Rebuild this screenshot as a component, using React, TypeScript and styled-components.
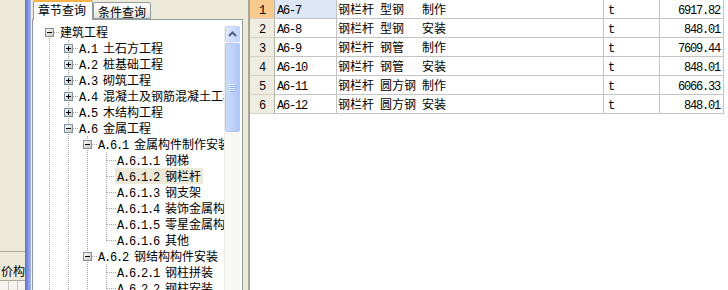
import React from 'react';
import styled, { createGlobalStyle } from 'styled-components';

const GlobalStyle = createGlobalStyle`
  html, body {
    margin: 0;
    padding: 0;
    background: #ffffff;
  }
  body {
    font-family: "Noto Sans CJK SC", "DejaVu Sans", sans-serif;
    font-size: 12px;
  }
`;

const Screen = styled.div`
  display: flex;
  width: 728px;
  height: 290px;
  overflow: hidden;
  background: #ffffff;
`;

const SideStrip = styled.div`
  display: flex;
  flex-direction: column;
  justify-content: flex-end;
  width: 25px;
  flex: none;
  background: #ece9d8;
`;

const SideTab = styled.div`
  height: 30px;
  border-top: 1px solid #aca899;
  border-bottom: 1px solid #aca899;
  box-sizing: border-box;
  padding: 12px 0 0 1px;
  line-height: 14px;
  white-space: nowrap;
  overflow: hidden;
  color: #000;
`;

const SideFoot = styled.div`
  display: flex;
  height: 9px;
  background: #f4f3ee;
`;

const SideFootCell = styled.div`
  width: 8px;
  border-right: 1px solid #c9c7ba;
`;

const BlueBar = styled.div`
  width: 6px;
  flex: none;
  background: linear-gradient(to right, #5d70c9, #8092e2 50%, #a4b3f1);
  border-right: 1px solid #f2f4fd;
`;

const NavPanel = styled.div`
  display: flex;
  flex-direction: column;
  width: 216px;
  flex: none;
  background: #ece9d8;
`;

const TabStrip = styled.div`
  display: flex;
  align-items: flex-end;
  height: 19px;
  padding-left: 1px;
  position: relative;
  z-index: 1;
`;

const Tab = styled.div<{ $active?: boolean }>`
  box-sizing: border-box;
  height: ${(p) => (p.$active ? '20px' : '17px')};
  margin-bottom: ${(p) => (p.$active ? '-1px' : '0')};
  width: ${(p) => (p.$active ? '60px' : '58px')};
  padding: ${(p) => (p.$active ? '0 0 0 4px' : '1px 0 0 4px')};
  line-height: 15px;
  border: 1px solid #919b9c;
  border-bottom: ${(p) => (p.$active ? 'none' : '1px solid #919b9c')};
  border-top: ${(p) => (p.$active ? '2px solid #f8b344' : '1px solid #919b9c')};
  border-radius: 2px 2px 0 0;
  background: ${(p) =>
    p.$active ? '#fcfcfe' : 'linear-gradient(#ffffff, #f3f3ef 60%, #e4e3dc)'};
  color: #000;
  white-space: nowrap;
`;

const TabPage = styled.div`
  flex: 1;
  display: flex;
  margin-right: 5px;
  padding: 4px 2px 0 1px;
  border: 1px solid #919b9c;
  border-bottom: none;
  background: #ffffff;
  min-height: 0;
`;

const Tree = styled.div`
  flex: 1;
  min-width: 0;
  overflow: hidden;
  padding-left: 6px;
`;

const TreeRow = styled.div`
  display: flex;
  align-items: center;
  height: 16px;
  white-space: nowrap;
`;

const Label = styled.span<{ $selected?: boolean }>`
  margin-left: -1px;
  padding: 0 2px;
  height: 16px;
  line-height: 16px;
  background: ${(p) => (p.$selected ? '#ece9d8' : 'transparent')};
  color: #000;
`;

// half-width latin, 6px per character like the bitmap font in the original
const Code = styled.span`
  font-family: "Liberation Mono", "DejaVu Sans Mono", monospace;
  font-size: 12px;
  letter-spacing: -1.2px;
`;

const Scrollbar = styled.div`
  display: flex;
  flex-direction: column;
  width: 16px;
  flex: none;
  margin-top: 2px;
  background: #f7f7f3;
  border-left: 1px solid #eeede5;
  box-sizing: border-box;
`;

const ScrollButton = styled.div`
  display: flex;
  align-items: center;
  justify-content: center;
  height: 16px;
  box-sizing: border-box;
  border: 1px solid #c3d3fd;
  border-radius: 2px;
  background: linear-gradient(to right, #dce7fe, #c4d5fc);
`;

const Thumb = styled.div`
  display: flex;
  align-items: center;
  justify-content: center;
  height: 89px;
  margin-top: 1px;
  box-sizing: border-box;
  border: 1px solid #b4c8f6;
  border-radius: 2px;
  background: linear-gradient(to right, #cad9fd, #bdd0fb 60%, #b0c5f7);
`;

const Splitter = styled.div`
  width: 1px;
  flex: none;
  background: #aca899;
`;

const GridPanel = styled.div`
  flex: 1;
  border-left: 1px solid #8fa3c0;
  background: #ffffff;
`;

const GridRow = styled.div`
  display: grid;
  grid-template-columns: 25px 62px 267px 56px 64px;
  height: 19px;
`;

const Cell = styled.div<{ $align?: 'left' | 'right' | 'center'; $pad?: number; $bg?: string }>`
  box-sizing: border-box;
  height: 19px;
  line-height: 18px;
  border-right: 1px solid #c4c4c4;
  border-bottom: 1px solid #c4c4c4;
  text-align: ${(p) => p.$align || 'left'};
  padding: ${(p) => (p.$align === 'right' ? `0 ${p.$pad ?? 3}px 0 0` : `0 0 0 ${p.$pad ?? 2}px`)};
  background: ${(p) => p.$bg || '#ffffff'};
  white-space: nowrap;
  overflow: hidden;
  color: #000;
`;

const HeaderCell = styled(Cell)<{ $current?: boolean }>`
  background: ${(p) => (p.$current ? '#f9c98e' : '#efede2')};
  border-right-color: #b5b3a6;
  border-bottom-color: #d4d2c6;
  text-align: center;
  padding: 0;
`;

const Word = styled.span<{ $w?: number }>`
  display: inline-block;
  width: ${(p) => (p.$w ? `${p.$w}px` : 'auto')};
`;

type Guide = 'none' | 'line' | 'tee' | 'end' | 'first';

interface Node {
  guides: Guide[];
  toggle?: 'plus' | 'minus';
  code?: string;
  text: string;
  selected?: boolean;
}

const nodes: Node[] = [
  { guides: ['first'], toggle: 'minus', text: '建筑工程' },
  { guides: ['line', 'tee'], toggle: 'plus', code: 'A.1 ', text: '土石方工程' },
  { guides: ['line', 'tee'], toggle: 'plus', code: 'A.2 ', text: '桩基础工程' },
  { guides: ['line', 'tee'], toggle: 'plus', code: 'A.3 ', text: '砌筑工程' },
  { guides: ['line', 'tee'], toggle: 'plus', code: 'A.4 ', text: '混凝土及钢筋混凝土工程' },
  { guides: ['line', 'tee'], toggle: 'plus', code: 'A.5 ', text: '木结构工程' },
  { guides: ['line', 'tee'], toggle: 'minus', code: 'A.6 ', text: '金属工程' },
  { guides: ['line', 'line', 'tee'], toggle: 'minus', code: 'A.6.1 ', text: '金属构件制作安装' },
  { guides: ['line', 'line', 'line', 'tee'], code: 'A.6.1.1 ', text: '钢梯' },
  { guides: ['line', 'line', 'line', 'tee'], code: 'A.6.1.2 ', text: '钢栏杆', selected: true },
  { guides: ['line', 'line', 'line', 'tee'], code: 'A.6.1.3 ', text: '钢支架' },
  { guides: ['line', 'line', 'line', 'tee'], code: 'A.6.1.4 ', text: '装饰金属构件' },
  { guides: ['line', 'line', 'line', 'tee'], code: 'A.6.1.5 ', text: '零星金属构件' },
  { guides: ['line', 'line', 'line', 'end'], code: 'A.6.1.6 ', text: '其他' },
  { guides: ['line', 'line', 'tee'], toggle: 'minus', code: 'A.6.2 ', text: '钢结构构件安装' },
  { guides: ['line', 'line', 'line', 'tee'], code: 'A.6.2.1 ', text: '钢柱拼装' },
  { guides: ['line', 'line', 'line', 'tee'], code: 'A.6.2.2 ', text: '钢柱安装' },
];

const rows = [
  { code: 'A6-7', words: ['钢栏杆', '型钢', '制作'], unit: 't', qty: '6917.82' },
  { code: 'A6-8', words: ['钢栏杆', '型钢', '安装'], unit: 't', qty: '848.01' },
  { code: 'A6-9', words: ['钢栏杆', '钢管', '制作'], unit: 't', qty: '7609.44' },
  { code: 'A6-10', words: ['钢栏杆', '钢管', '安装'], unit: 't', qty: '848.01' },
  { code: 'A6-11', words: ['钢栏杆', '圆方钢', '制作'], unit: 't', qty: '6066.33' },
  { code: 'A6-12', words: ['钢栏杆', '圆方钢', '安装'], unit: 't', qty: '848.01' },
];

const DOT = '#a5a5a5';

function GuideCell({ kind, toggle }: { kind: Guide; toggle?: 'plus' | 'minus' }) {
  const dash = { stroke: DOT, strokeWidth: 1, strokeDasharray: '1 1' };
  return (
    <svg width="19" height="16" viewBox="0 0 19 16" style={{ flex: 'none' }}>
      {kind !== 'none' && kind !== 'first' && (
        <line x1="9.5" y1="0" x2="9.5" y2={kind === 'end' ? 9 : 16} {...dash} />
      )}
      {kind === 'first' && <line x1="9.5" y1="8" x2="9.5" y2="16" {...dash} />}
      {kind !== 'none' && kind !== 'line' && <line x1="10" y1="8.5" x2="19" y2="8.5" {...dash} />}
      {toggle && (
        <g>
          <defs>
            <linearGradient id="tg" x1="0" y1="0" x2="1" y2="1">
              <stop offset="0" stopColor="#ffffff" />
              <stop offset="1" stopColor="#c7c2b2" />
            </linearGradient>
          </defs>
          <rect x="5.5" y="4.5" width="8" height="8" fill="url(#tg)" stroke="#7c91a7" />
          <line x1="7" y1="8.5" x2="12" y2="8.5" stroke="#000" />
          {toggle === 'plus' && <line x1="9.5" y1="6" x2="9.5" y2="11" stroke="#000" />}
        </g>
      )}
    </svg>
  );
}

function UpArrow() {
  return (
    <svg width="9" height="6" viewBox="0 0 9 6">
      <path d="M1 5 L4.5 1.5 L8 5" fill="none" stroke="#4d6185" strokeWidth="2" />
    </svg>
  );
}

function Grip() {
  return (
    <svg width="7" height="8" viewBox="0 0 7 8">
      {[0, 2, 4, 6].map((y) => (
        <g key={y}>
          <line x1="0" y1={y + 0.5} x2="6" y2={y + 0.5} stroke="#eef4fe" />
          <line x1="1" y1={y + 1.5} x2="7" y2={y + 1.5} stroke="#8cb0f8" />
        </g>
      ))}
    </svg>
  );
}

export default function App() {
  return (
    <>
      <GlobalStyle />
      <Screen>
        <SideStrip>
          <SideTab>价构...</SideTab>
          <SideFoot>
            <SideFootCell />
            <SideFootCell />
          </SideFoot>
        </SideStrip>
        <BlueBar />
        <NavPanel>
          <TabStrip>
            <Tab $active>章节查询</Tab>
            <Tab>条件查询</Tab>
          </TabStrip>
          <TabPage>
            <Tree>
              {nodes.map((n, i) => (
                <TreeRow key={i}>
                  {n.guides.map((g, j) => (
                    <GuideCell
                      key={j}
                      kind={g}
                      toggle={j === n.guides.length - 1 ? n.toggle : undefined}
                    />
                  ))}
                  <Label $selected={n.selected}>
                    {n.code && <Code>{n.code}</Code>}
                    {n.text}
                  </Label>
                </TreeRow>
              ))}
            </Tree>
            <Scrollbar>
              <ScrollButton>
                <UpArrow />
              </ScrollButton>
              <Thumb>
                <Grip />
              </Thumb>
            </Scrollbar>
          </TabPage>
        </NavPanel>
        <Splitter />
        <GridPanel>
          {rows.map((r, i) => (
            <GridRow key={r.code}>
              <HeaderCell $current={i === 0}>
                <Code>{i + 1}</Code>
              </HeaderCell>
              <Cell $bg={i === 0 ? '#dde7f5' : undefined}>
                <Code>{r.code}</Code>
              </Cell>
              <Cell $pad={1}>
                <Word $w={42}>{r.words[0]}</Word>
                <Word $w={42}>{r.words[1]}</Word>
                <Word>{r.words[2]}</Word>
              </Cell>
              <Cell $pad={4}>
                <Code>{r.unit}</Code>
              </Cell>
              <Cell $align="right">
                <Code>{r.qty}</Code>
              </Cell>
            </GridRow>
          ))}
        </GridPanel>
      </Screen>
    </>
  );
}
